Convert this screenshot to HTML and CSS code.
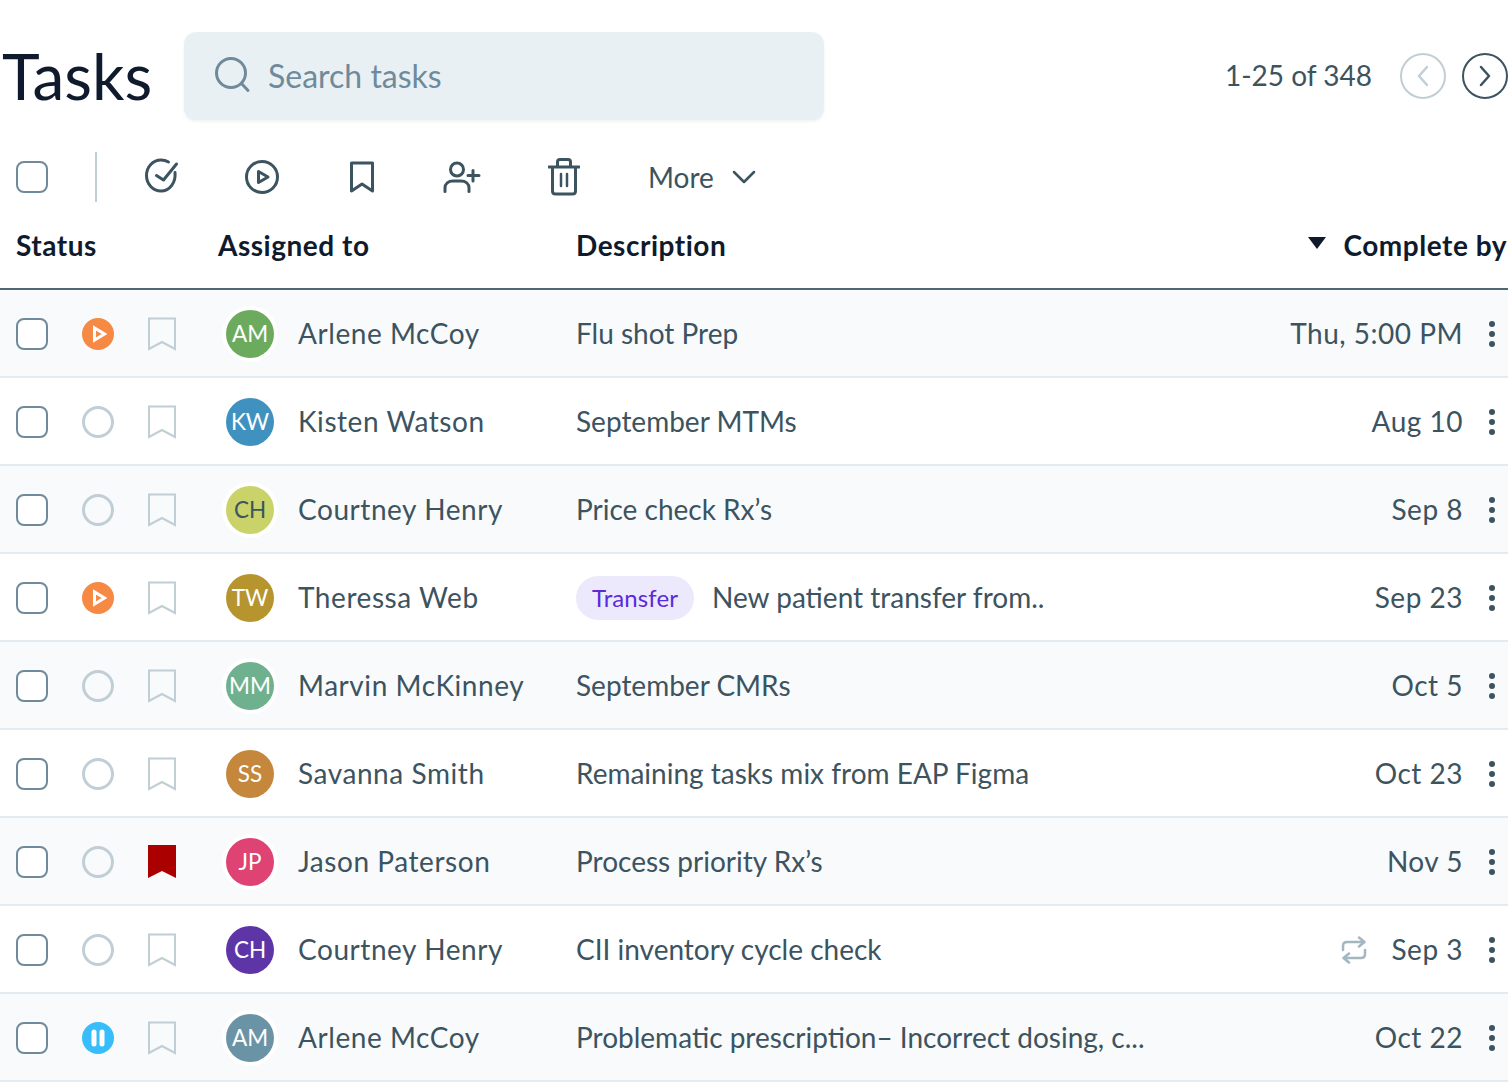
FILE: index.html
```html
<!DOCTYPE html>
<html lang="en">
<head>
<meta charset="utf-8">
<title>Tasks</title>
<link rel="stylesheet" href="styles.css">
</head>
<body>
<svg class="sprites" width="0" height="0" aria-hidden="true">
  <symbol id="bm" viewBox="0 0 28 34"><path d="M1 1.5H27V32L14 25 1 32Z" fill="none" stroke="#c0ced6" stroke-width="2"/></symbol>
  <symbol id="bmf" viewBox="0 0 28 34"><path d="M0 0H28V33L14 26 0 33Z" fill="#ab0000"/></symbol>
  <symbol id="play" viewBox="0 0 32 32"><circle cx="16" cy="16" r="16" fill="#f68a45"/><path d="M12.5 10V22L22.5 16Z" fill="none" stroke="#fff" stroke-width="3" stroke-linejoin="miter"/></symbol>
  <symbol id="pause" viewBox="0 0 32 32"><circle cx="16" cy="16" r="16" fill="#38bdfb"/><rect x="9.500" y="7.500" width="5" height="17" rx="2.500" fill="#fff"/><rect x="17.500" y="7.500" width="5" height="17" rx="2.500" fill="#fff"/></symbol>
  <symbol id="idle" viewBox="0 0 32 32"><circle cx="16" cy="16" r="14.5" fill="none" stroke="#c0ced6" stroke-width="3"/></symbol>
  <symbol id="kebab" viewBox="0 0 6 26"><circle cx="3" cy="3" r="3" fill="#3c5360"/><circle cx="3" cy="13" r="3" fill="#3c5360"/><circle cx="3" cy="23" r="3" fill="#3c5360"/></symbol>
</svg>
<main class="page">
  <header class="top">
    <h1 class="title">Tasks</h1>
    <div class="search">
      <svg class="search-icon" width="36" height="38" viewBox="0 0 36 38"><circle cx="16" cy="17" r="14.5" fill="none" stroke="#6f8a9a" stroke-width="3"/><path d="M26.5 27.5L33 34.5" stroke="#6f8a9a" stroke-width="3" stroke-linecap="round"/></svg>
      <span class="search-text">Search tasks</span>
    </div>
    <div class="pager">
      <span class="pager-text">1-25 of 348</span>
      <span class="pager-btn pager-off"><svg width="14" height="22" viewBox="0 0 14 22"><path d="M11 2L3 11L11 20" fill="none" stroke="#c0ced6" stroke-width="2.5" stroke-linecap="round" stroke-linejoin="round"/></svg></span>
      <span class="pager-btn pager-on"><svg width="14" height="22" viewBox="0 0 14 22"><path d="M3 2L11 11L3 20" fill="none" stroke="#3c5360" stroke-width="2.5" stroke-linecap="round" stroke-linejoin="round"/></svg></span>
    </div>
  </header>

  <div class="toolbar">
    <span class="check"></span>
    <span class="divider"></span>
    <svg class="tool tool-check" width="36" height="36" viewBox="0 0 36 36"><path d="M30 14.500C31 24 25 33 16 33 8 33 1.500 26 1.500 17.500S8 2 16 2C19 2 21.500 2.800 23.500 4" fill="none" stroke="#3c5360" stroke-width="3" stroke-linecap="round"/><path d="M11.500 17.500L18.500 22L31.500 6" fill="none" stroke="#3c5360" stroke-width="3" stroke-linecap="round" stroke-linejoin="round"/></svg>
    <svg class="tool tool-play" width="36" height="36" viewBox="0 0 36 36"><circle cx="18" cy="18" r="15.500" fill="none" stroke="#3c5360" stroke-width="3"/><path d="M14.500 12.500V23.500L24 18Z" fill="none" stroke="#3c5360" stroke-width="3" stroke-linejoin="round"/></svg>
    <svg class="tool tool-mark" width="28" height="32" viewBox="0 0 28 32"><path d="M3.500 2H24.500V30L14 23L3.500 30Z" fill="none" stroke="#3c5360" stroke-width="3" stroke-linejoin="round"/></svg>
    <svg class="tool tool-user" width="38" height="32" viewBox="0 0 38 32"><circle cx="14" cy="8.500" r="6.500" fill="none" stroke="#3c5360" stroke-width="3"/><path d="M2 30.500V27C2 22.500 5.500 20 10 20H18C22.500 20 26 22.500 26 27V30.500" fill="none" stroke="#3c5360" stroke-width="3" stroke-linecap="round"/><path d="M30 9.500V20M25 14.500H36" stroke="#3c5360" stroke-width="3" stroke-linecap="round"/></svg>
    <svg class="tool tool-trash" width="32" height="38" viewBox="0 0 32 38"><path d="M1 9H31" stroke="#3c5360" stroke-width="3" stroke-linecap="round"/><path d="M9.500 9V4C9.500 2.500 10.500 1.500 12 1.500H20C21.500 1.500 22.500 2.500 22.500 4V9" fill="none" stroke="#3c5360" stroke-width="3"/><path d="M4.500 9V33C4.500 35 5.500 36 7.500 36H24.500C26.500 36 27.500 35 27.500 33V9" fill="none" stroke="#3c5360" stroke-width="3"/><path d="M13 16V28M19 16V28" stroke="#3c5360" stroke-width="2.500" stroke-linecap="round"/></svg>
    <span class="more">More</span>
    <svg class="more-chev" width="24" height="14" viewBox="0 0 24 14"><path d="M2 2L12 12L22 2" fill="none" stroke="#3c5360" stroke-width="2.500" stroke-linecap="round" stroke-linejoin="round"/></svg>
  </div>

  <div class="head">
    <span>Status</span>
    <span>Assigned to</span>
    <span>Description</span>
    <span class="sort"><i class="sort-arrow"></i>Complete by</span>
  </div>

  <div class="row">
    <span class="check"></span>
    <svg class="st" width="32" height="32"><use href="#play"/></svg>
    <svg class="bm" width="28" height="34"><use href="#bm"/></svg>
    <span class="av av-green">AM</span>
    <span class="name">Arlene McCoy</span>
    <span class="desc">Flu shot Prep</span>
    <span class="date">Thu, 5:00 PM</span>
    <svg class="kebab" width="6" height="26"><use href="#kebab"/></svg>
  </div>
  <div class="row">
    <span class="check"></span>
    <svg class="st" width="32" height="32"><use href="#idle"/></svg>
    <svg class="bm" width="28" height="34"><use href="#bm"/></svg>
    <span class="av av-blue">KW</span>
    <span class="name">Kisten Watson</span>
    <span class="desc">September MTMs</span>
    <span class="date">Aug 10</span>
    <svg class="kebab" width="6" height="26"><use href="#kebab"/></svg>
  </div>
  <div class="row">
    <span class="check"></span>
    <svg class="st" width="32" height="32"><use href="#idle"/></svg>
    <svg class="bm" width="28" height="34"><use href="#bm"/></svg>
    <span class="av av-lime">CH</span>
    <span class="name">Courtney Henry</span>
    <span class="desc">Price check Rx’s</span>
    <span class="date">Sep 8</span>
    <svg class="kebab" width="6" height="26"><use href="#kebab"/></svg>
  </div>
  <div class="row">
    <span class="check"></span>
    <svg class="st" width="32" height="32"><use href="#play"/></svg>
    <svg class="bm" width="28" height="34"><use href="#bm"/></svg>
    <span class="av av-olive">TW</span>
    <span class="name">Theressa Web</span>
    <span class="desc"><span class="tag">Transfer</span>New patient transfer from..</span>
    <span class="date">Sep 23</span>
    <svg class="kebab" width="6" height="26"><use href="#kebab"/></svg>
  </div>
  <div class="row">
    <span class="check"></span>
    <svg class="st" width="32" height="32"><use href="#idle"/></svg>
    <svg class="bm" width="28" height="34"><use href="#bm"/></svg>
    <span class="av av-mint">MM</span>
    <span class="name">Marvin McKinney</span>
    <span class="desc">September CMRs</span>
    <span class="date">Oct 5</span>
    <svg class="kebab" width="6" height="26"><use href="#kebab"/></svg>
  </div>
  <div class="row">
    <span class="check"></span>
    <svg class="st" width="32" height="32"><use href="#idle"/></svg>
    <svg class="bm" width="28" height="34"><use href="#bm"/></svg>
    <span class="av av-amber">SS</span>
    <span class="name">Savanna Smith</span>
    <span class="desc">Remaining tasks mix from EAP Figma</span>
    <span class="date">Oct 23</span>
    <svg class="kebab" width="6" height="26"><use href="#kebab"/></svg>
  </div>
  <div class="row">
    <span class="check"></span>
    <svg class="st" width="32" height="32"><use href="#idle"/></svg>
    <svg class="bm" width="28" height="34"><use href="#bmf"/></svg>
    <span class="av av-pink">JP</span>
    <span class="name">Jason Paterson</span>
    <span class="desc">Process priority Rx’s</span>
    <span class="date">Nov 5</span>
    <svg class="kebab" width="6" height="26"><use href="#kebab"/></svg>
  </div>
  <div class="row">
    <span class="check"></span>
    <svg class="st" width="32" height="32"><use href="#idle"/></svg>
    <svg class="bm" width="28" height="34"><use href="#bm"/></svg>
    <span class="av av-purple">CH</span>
    <span class="name">Courtney Henry</span>
    <span class="desc">CII inventory cycle check</span>
    <span class="date"><svg class="repeat" width="26" height="28" viewBox="0 0 26 28"><path d="M2 14V10C2 7.500 3.500 6 6 6H23M18 1.500L23.500 6L18 10.500" fill="none" stroke="#a3b6c1" stroke-width="2.500" stroke-linecap="round" stroke-linejoin="round"/><path d="M24 14V18C24 20.500 22.500 22 20 22H3M8 17.500L2.500 22L8 26.500" fill="none" stroke="#a3b6c1" stroke-width="2.500" stroke-linecap="round" stroke-linejoin="round"/></svg>Sep 3</span>
    <svg class="kebab" width="6" height="26"><use href="#kebab"/></svg>
  </div>
  <div class="row">
    <span class="check"></span>
    <svg class="st" width="32" height="32"><use href="#pause"/></svg>
    <svg class="bm" width="28" height="34"><use href="#bm"/></svg>
    <span class="av av-slate">AM</span>
    <span class="name">Arlene McCoy</span>
    <span class="desc">Problematic prescription– Incorrect dosing, c...</span>
    <span class="date">Oct 22</span>
    <svg class="kebab" width="6" height="26"><use href="#kebab"/></svg>
  </div>
</main>
</body>
</html>
```

FILE: styles.css
```css
* { box-sizing: border-box; }
html, body { margin: 0; padding: 0; background: #fff; }
body { padding-top: 32px; height: 1082px; overflow: hidden; font-family: Lato, "Open Sans", sans-serif; color: #3c5360; }
.sprites { display: block; height: 0; }
.page { width: 1508px; }

.top { display: flex; align-items: center; height: 88px; padding-left: 2px; }
.title { margin: 0; width: 182px; font-size: 64px; font-weight: 400; line-height: 88px; color: #0f1b2d; }
.search { display: flex; align-items: center; width: 640px; height: 88px; padding: 0 0 2px 31px; background: #e9f0f4; border-radius: 12px; box-shadow: 0 2px 3px rgba(60, 83, 96, .07); }
.search-icon { margin-right: 17px; }
.search-text { font-size: 32px; color: #6f8a9a; }
.pager { display: flex; align-items: center; margin-left: auto; }
.pager-text { font-size: 28px; margin: -2px 28px 0 0; }
.pager-btn { display: flex; align-items: center; justify-content: center; width: 46px; height: 46px; border-radius: 50%; border: 2px solid; }
.pager-off { border-color: #c0ced6; margin-right: 16px; }
.pager-on { border-color: #3c5360; }

.check { display: block; width: 32px; height: 32px; border: 2px solid #6f8a9a; border-radius: 8px; background: #fff; }

.toolbar { display: flex; align-items: center; height: 50px; margin-top: 32px; padding-left: 16px; }
.divider { width: 2px; height: 50px; background: #c0ced6; margin-left: 47px; }
.tool { flex: none; }
.tool-check { margin-left: 48px; margin-top: -3px; }
.tool-play { margin-left: 63px; }
.tool-mark { margin-left: 68px; }
.tool-user { margin-left: 67px; }
.tool-trash { margin-left: 67px; }
.more { font-size: 28px; margin: -1px 0 0 68px; }
.more-chev { margin-left: 18px; }

.head { display: grid; grid-template-columns: 202px 358px 1fr auto; align-items: center; height: 88px; padding: 0 1px 0 16px; border-bottom: 2px solid #4f6673; font-size: 28px; font-weight: 700; letter-spacing: .52px; color: #0f1b2d; }
.sort { display: flex; align-items: center; }
.sort-arrow { width: 0; height: 0; margin: -4px 18px 0 0; border-left: 9px solid transparent; border-right: 9px solid transparent; border-top: 12px solid #0f1b2d; }

.row { display: grid; grid-template-columns: 66px 66px 78px 72px 278px 1fr auto 45px; align-items: center; height: 88px; padding: 0 0 0 16px; border-bottom: 2px solid #e4ebf0; background: #fff; font-size: 28px; white-space: nowrap; }
.row:nth-of-type(odd) { background: #f8fafc; }

.row > .check, .st, .bm, .av, .kebab { margin-top: 2px; }
.st, .bm { display: block; }
.kebab { display: block; margin-left: 26px; }

.av { display: flex; align-items: center; justify-content: center; width: 48px; height: 48px; padding-bottom: 2px; border-radius: 50%; color: #fff; font-size: 22.5px; box-shadow: 0 0 0 4px #fff; }
.av-green { background: #6cab5e; }
.av-blue { background: #3f92bf; }
.av-lime { background: #c9d36a; color: #3c5360; }
.av-olive { background: #b6952f; }
.av-mint { background: #6fb18f; }
.av-amber { background: #c4873b; }
.av-pink { background: #de4373; }
.av-purple { background: #5e35a6; }
.av-slate { background: #6b93a6; }

.name { letter-spacing: .56px; }
.desc { display: flex; align-items: center; }
.date { display: flex; align-items: center; justify-content: flex-end; letter-spacing: .5px; }
.repeat { margin: 2px 25px 0 0; }
.tag { display: flex; align-items: center; height: 44px; padding: 0 16px 2px; margin: 2px 18px 0 0; border-radius: 22px; background: #ece9fd; color: #5b2bd9; font-size: 24px; letter-spacing: .1px; }
```
